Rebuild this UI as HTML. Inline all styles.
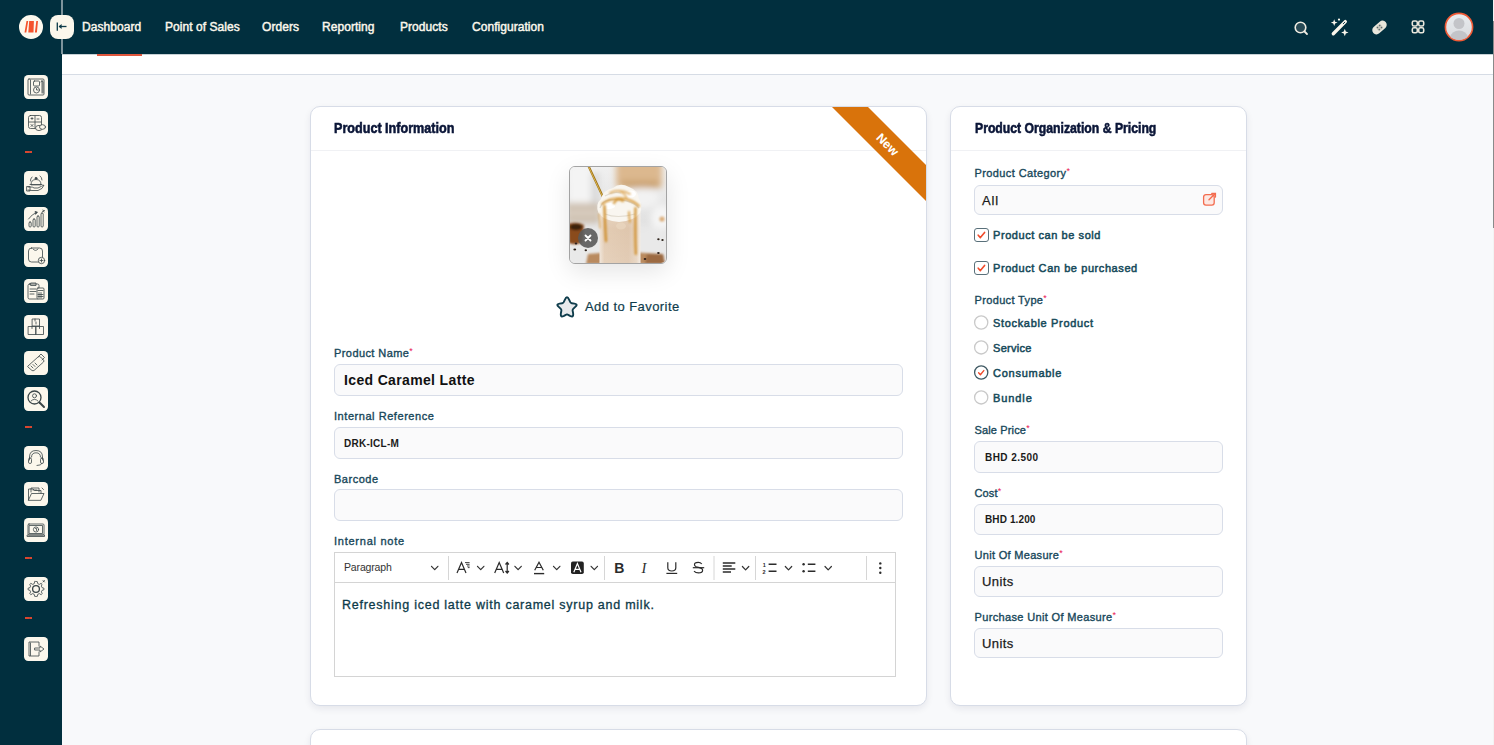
<!DOCTYPE html>
<html><head><meta charset="utf-8">
<style>
*{margin:0;padding:0;box-sizing:border-box}
html,body{width:1494px;height:745px;overflow:hidden;background:#f8f9fb;font-family:"Liberation Sans",sans-serif}
.a{position:absolute}
.t{position:absolute;line-height:1;white-space:nowrap}
#hdr{left:0;top:0;width:1493px;height:54px;background:#012f3e}
#side{left:0;top:0;width:62px;height:745px;background:#012f3e}
#strip{left:62px;top:54px;width:1431px;height:21px;background:#fff;border-bottom:1px solid #d6dce5}
.nav{font-size:12px;color:#fbf7ec;-webkit-text-stroke:.45px #fbf7ec;letter-spacing:.05px;top:21px}
.card{position:absolute;background:#fff;border:1px solid #d7dce7;border-radius:10px;box-shadow:0 3px 7px rgba(20,30,60,.08);overflow:hidden}
.ch{position:absolute;left:0;top:0;right:0;height:44px;border-bottom:1px solid #f0f1f4}
.title{font-size:14px;font-weight:bold;color:#0b1638;-webkit-text-stroke:.55px #0b1638;transform-origin:0 0;transform:scaleX(.9)}
.lbl{font-size:11px;color:#17475a;-webkit-text-stroke:.35px #17475a;letter-spacing:.15px}
.req{color:#e8134f;font-size:9px;vertical-align:top;position:relative;top:-1px;-webkit-text-stroke:0}
.inp{position:absolute;background:#fafafb;border:1.5px solid #d8dde8;border-radius:6px}
.sico{position:absolute;left:24px;width:24px;height:24px;background:#fbf7ec;border-radius:5px}
.dash{position:absolute;left:25px;width:7px;height:2px;background:repeating-linear-gradient(90deg,#d9462f 0 2px,#b8473a 2px 2.4px)}
.cbt{font-size:11px;color:#164a5a;-webkit-text-stroke:.5px #164a5a}
</style></head><body>
<div id="side" class="a"></div>
<div id="hdr" class="a"></div>
<div id="strip" class="a"></div>
<div class="a" style="left:62px;top:54px;width:1431px;height:1px;background:rgba(1,47,62,.22)"></div>
<!-- header divider line -->
<div class="a" style="left:61px;top:0;width:2px;height:54px;background:#7d939b"></div>
<!-- red underline -->
<div class="a" style="left:97px;top:54px;width:45px;height:1.5px;background:#e0573d"></div>

<!-- logo -->
<div class="a" style="left:19.4px;top:15px;width:23.8px;height:23.8px;border-radius:50%;background:#fdf9ee"></div>
<svg class="a" style="left:0;top:0" width="50" height="50" viewBox="0 0 50 50">
<path d="M24.5 32.6 L26.5 21 L28.2 21 L26.3 32.6 Z M29.2 21 L33.9 21 L33.5 32.6 L28.3 32.6 Z M36.3 21 L38 21 L36.9 32.6 L34.9 32.6 Z" fill="#f4532c"/>
</svg>
<!-- collapse button -->
<div class="a" style="left:50px;top:15px;width:24px;height:24px;border-radius:8px;background:#fbf7ec"></div>
<svg class="a" style="left:50px;top:15px" width="24" height="24" viewBox="0 0 24 24">
<path d="M7.3 7.5 V15.7" stroke="#0d3a49" stroke-width="1.3"/>
<path d="M9 11.5 H16.5" stroke="#0d3a49" stroke-width="1.3"/>
<path d="M8.6 11.5 L11.6 9 V14 Z" fill="#0d3a49"/>
</svg>

<!-- nav -->
<span class="t nav" style="left:82px">Dashboard</span>
<span class="t nav" style="left:165px">Point of Sales</span>
<span class="t nav" style="left:262px">Orders</span>
<span class="t nav" style="left:322px">Reporting</span>
<span class="t nav" style="left:400px">Products</span>
<span class="t nav" style="left:472px">Configuration</span>

<!-- header right icons -->
<svg class="a" style="left:1290px;top:16.7px" width="22" height="22" viewBox="0 0 22 22">
<circle cx="10.5" cy="10.5" r="5.3" fill="#284a55" stroke="#efece2" stroke-width="1.6"/>
<path d="M14.5 14.5 L17 17" stroke="#efece2" stroke-width="1.8" stroke-linecap="round"/>
</svg>
<svg class="a" style="left:1328px;top:16px" width="22" height="22" viewBox="0 0 22 22">
<path d="M5.3 17.8 L17.3 5.6" stroke="#fbf7ec" stroke-width="3.4" stroke-linecap="round"/>
<path d="M15.2 7.8 L16.8 6.2" stroke="#012f3e" stroke-width=".9" stroke-linecap="round"/>
<path d="M6.2 3.2 L7.1 5.7 L9.6 6.6 L7.1 7.5 L6.2 10 L5.3 7.5 L2.8 6.6 L5.3 5.7 Z" fill="#fbf7ec"/>
<path d="M16.8 12.8 L17.8 15.5 L20.5 16.5 L17.8 17.5 L16.8 20.2 L15.8 17.5 L13.1 16.5 L15.8 15.5 Z" fill="#fbf7ec"/>
<circle cx="11" cy="3.6" r="1.1" fill="#fbf7ec"/>
</svg>
<svg class="a" style="left:1368px;top:16px" width="22" height="22" viewBox="0 0 22 22">
<g transform="rotate(-42 11.5 11.5)"><rect x="3.2" y="7.3" width="16.6" height="8.4" rx="4.2" fill="#e9e7dc"/>
<rect x="8.6" y="8.7" width="5.8" height="5.6" rx="1" fill="#c9c8bd"/>
<circle cx="10" cy="10.2" r=".75" fill="#5d6b6e"/><circle cx="13" cy="10.2" r=".75" fill="#5d6b6e"/><circle cx="10" cy="12.8" r=".75" fill="#5d6b6e"/><circle cx="13" cy="12.8" r=".75" fill="#5d6b6e"/></g>
</svg>
<svg class="a" style="left:1407px;top:16px" width="22" height="22" viewBox="0 0 22 22">
<g fill="none" stroke="#e9e7dc" stroke-width="1.6">
<rect x="5.3" y="5" width="5" height="5" rx="1.6"/><rect x="11.7" y="5" width="5" height="5" rx="1.6"/>
<rect x="5.3" y="11.8" width="5" height="5" rx="1.6"/><rect x="11.7" y="11.8" width="5" height="5" rx="1.6"/>
</g></svg>
<svg class="a" style="left:1444px;top:12px" width="30" height="30" viewBox="0 0 30 30">
<defs><linearGradient id="av" x1="0" y1="0" x2="0" y2="1"><stop offset="0" stop-color="#e8ecef"/><stop offset="1" stop-color="#d9dadd"/></linearGradient>
<clipPath id="avc"><circle cx="15" cy="15" r="13"/></clipPath></defs>
<circle cx="15" cy="15" r="13.6" fill="url(#av)" stroke="#f05a35" stroke-width="1.6"/>
<g clip-path="url(#avc)"><circle cx="15" cy="11.5" r="5.5" fill="#c3c4c8"/><ellipse cx="15" cy="25" rx="8.5" ry="6.5" fill="#c3c4c8"/></g>
</svg>

<!-- sidebar icons -->
<svg class="a" style="left:24px;top:75px" width="24" height="24" viewBox="0 0 24 24"><rect width="24" height="24" rx="4.2" fill="#fbf7ec"/><g fill="none" stroke="#3a4547" stroke-width=".8" stroke-linecap="round" stroke-linejoin="round"><rect x="4" y="4" width="16" height="16" rx="1" /><path d="M6.5 5 V19"/><rect x="9.5" y="6" width="6" height="5" rx="1"/><circle cx="12.5" cy="15" r="3"/><path d="M12.5 13.5 V15 H14"/><path d="M18 6 V18 M17 7 L18 5.5 L19 7 V18"/></g></svg>
<svg class="a" style="left:24px;top:111px" width="24" height="24" viewBox="0 0 24 24"><rect width="24" height="24" rx="4.2" fill="#fbf7ec"/><g fill="none" stroke="#3a4547" stroke-width=".8" stroke-linecap="round" stroke-linejoin="round"><rect x="4.5" y="4.5" width="13" height="13" rx="2"/><path d="M11 5 V17 M5 11 H17"/><path d="M7 7.5 H9 M8 6.5 V8.5 M13 8 H15 M7 13.5 L9 15.5 M9 13.5 L7 15.5"/><ellipse cx="15" cy="17" rx="3.5" ry="2.6" fill="#fbf7ec"/><ellipse cx="18.5" cy="16" rx="3" ry="2.3" fill="#fbf7ec"/></g></svg>
<svg class="a" style="left:24px;top:171px" width="24" height="24" viewBox="0 0 24 24"><rect width="24" height="24" rx="4.2" fill="#fbf7ec"/><g fill="none" stroke="#3a4547" stroke-width=".8" stroke-linecap="round" stroke-linejoin="round"><path d="M7 13.5 Q7 8.5 12 8.5 Q17 8.5 17 13.5 Z"/><path d="M6 13.5 H18"/><circle cx="12" cy="7.3" r="1" fill="#3b4a4f"/><path d="M4 16 H7 Q9 16 10 17 H14 Q18 15 20 14 Q19 18 14 19.5 H8 L4 19"/><path d="M16 5 Q18 6 18 9 M8 6 Q6 8 6.5 10"/><rect x="3" y="15.5" width="3" height="4.5"/></g></svg>
<svg class="a" style="left:24px;top:207px" width="24" height="24" viewBox="0 0 24 24"><rect width="24" height="24" rx="4.2" fill="#fbf7ec"/><g fill="none" stroke="#3a4547" stroke-width=".8" stroke-linecap="round" stroke-linejoin="round"><rect x="5" y="15" width="2.2" height="5" rx="1"/><rect x="9" y="12" width="2.2" height="8" rx="1"/><rect x="13" y="9" width="2.2" height="11" rx="1"/><rect x="17" y="6" width="2.2" height="14" rx="1"/><path d="M4.5 12 Q8 7 12.5 5.5"/><path d="M11.5 4.5 L13.5 5.3 L11.8 7 Z" fill="#3b4a4f"/><path d="M19 3 L20 5 M20.5 3.5 L18.5 4.5"/></g></svg>
<svg class="a" style="left:24px;top:243px" width="24" height="24" viewBox="0 0 24 24"><rect width="24" height="24" rx="4.2" fill="#fbf7ec"/><g fill="none" stroke="#3a4547" stroke-width=".8" stroke-linecap="round" stroke-linejoin="round"><rect x="4.5" y="5" width="14" height="14" rx="3"/><path d="M9 6 Q11.5 9 14 6"/><circle cx="17.5" cy="17.5" r="3.2" fill="#fbf7ec"/><path d="M17.5 16 V19 M16 17.5 H19"/></g></svg>
<svg class="a" style="left:24px;top:279px" width="24" height="24" viewBox="0 0 24 24"><rect width="24" height="24" rx="4.2" fill="#fbf7ec"/><g fill="none" stroke="#3a4547" stroke-width=".8" stroke-linecap="round" stroke-linejoin="round"><rect x="4" y="5" width="11" height="15" rx="1.5"/><path d="M7 4 H12 V6.5 H7 Z"/><path d="M6 10 H12 M6 12.5 H12 M6 15 H10"/><rect x="13" y="9" width="7" height="11" rx="1" fill="#fbf7ec"/><path d="M14 11.5 H19 M15 13.5 V19 M17 13.5 V19 M14 15.5 H19 M14 17.5 H19"/></g></svg>
<svg class="a" style="left:24px;top:315px" width="24" height="24" viewBox="0 0 24 24"><rect width="24" height="24" rx="4.2" fill="#fbf7ec"/><g fill="none" stroke="#3a4547" stroke-width=".8" stroke-linecap="round" stroke-linejoin="round"><rect x="8.5" y="4" width="7" height="7"/><rect x="4.5" y="11.5" width="7.5" height="8"/><rect x="12" y="11.5" width="7.5" height="8"/><path d="M11 4 V6 M8 11.5 V13.5 M15.5 11.5 V13.5"/><path d="M12 7 V9"/></g></svg>
<svg class="a" style="left:24px;top:351px" width="24" height="24" viewBox="0 0 24 24"><rect width="24" height="24" rx="4.2" fill="#fbf7ec"/><g fill="none" stroke="#3a4547" stroke-width=".8" stroke-linecap="round" stroke-linejoin="round"><path d="M4 15 L14 6 Q15.5 5 16.5 6 L19.5 9 Q20.5 10 19.5 11 L10 19.5 Q9 20 8 19.5 L4 16 Z"/><path d="M14.5 5.5 L17 3 L20.5 6.5 L18 9"/><path d="M7 15 L9 17 M9 13.5 L11 15.5 M11 12 L13 14"/></g></svg>
<svg class="a" style="left:24px;top:387px" width="24" height="24" viewBox="0 0 24 24"><rect width="24" height="24" rx="4.2" fill="#fbf7ec"/><g fill="none" stroke="#3a4547" stroke-width=".8" stroke-linecap="round" stroke-linejoin="round"><circle cx="10.5" cy="10.5" r="6.5" stroke-width="1.3"/><circle cx="10.5" cy="8.8" r="2"/><path d="M7 14 Q10.5 10.5 14 14"/><path d="M15.5 15.5 L20 20" stroke-width="2"/></g></svg>
<svg class="a" style="left:24px;top:446px" width="24" height="24" viewBox="0 0 24 24"><rect width="24" height="24" rx="4.2" fill="#fbf7ec"/><g fill="none" stroke="#3a4547" stroke-width=".8" stroke-linecap="round" stroke-linejoin="round"><path d="M5.5 14 V11 Q5.5 4.5 12 4.5 Q18.5 4.5 18.5 11 V14"/><rect x="4.5" y="12" width="3" height="5.5" rx="1.4"/><rect x="16.5" y="12" width="3" height="5.5" rx="1.4"/><path d="M18 17.5 Q17 19.5 13 19.5"/><path d="M7.5 11 Q7.5 6.8 12 6.8 Q16.5 6.8 16.5 11"/></g></svg>
<svg class="a" style="left:24px;top:482px" width="24" height="24" viewBox="0 0 24 24"><rect width="24" height="24" rx="4.2" fill="#fbf7ec"/><g fill="none" stroke="#3a4547" stroke-width=".8" stroke-linecap="round" stroke-linejoin="round"><path d="M4.5 18 V7 H9 L10.5 8.5 H17 V11"/><path d="M4.5 18 L7.5 11.5 H20 L17 18 Z"/><path d="M7 10 V6 H15 V10" /><path d="M9 8 H13"/><path d="M18 6 L19.5 7.5"/></g></svg>
<svg class="a" style="left:24px;top:518px" width="24" height="24" viewBox="0 0 24 24"><rect width="24" height="24" rx="4.2" fill="#fbf7ec"/><g fill="none" stroke="#3a4547" stroke-width=".8" stroke-linecap="round" stroke-linejoin="round"><rect x="4" y="6" width="16" height="11" rx="1"/><rect x="5.5" y="7.5" width="13" height="8"/><circle cx="12" cy="11.5" r="2.6"/><path d="M11.5 10.5 H12.5 V12.5"/><path d="M3.5 17 H20.5 V18.5 H3.5 Z"/></g></svg>
<svg class="a" style="left:24px;top:577px" width="24" height="24" viewBox="0 0 24 24"><rect width="24" height="24" rx="4.2" fill="#fbf7ec"/><g fill="none" stroke="#3a4547" stroke-width=".8" stroke-linecap="round" stroke-linejoin="round"><path d="M12 4.5 L13.3 4.6 L13.8 6.7 L15.3 7.4 L17.1 6.3 L18 7.2 L17.4 9.2 L18 10.6 L20 11.3 V12.7 L18 13.4 L17.4 14.8 L18.2 16.7 L17.2 17.7 L15.3 16.6 L13.8 17.3 L13.3 19.4 H10.7 L10.2 17.3 L8.7 16.6 L6.8 17.7 L5.8 16.7 L6.6 14.8 L6 13.4 L4 12.7 V11.3 L6 10.6 L6.6 9.2 L5.8 7.3 L6.8 6.3 L8.7 7.4 L10.2 6.7 L10.7 4.6 Z"/><circle cx="12" cy="12" r="3.4" stroke-width="1.3"/><path d="M19 3.5 L20.5 5 M20.5 3.5 L19 5"/></g></svg>
<svg class="a" style="left:24px;top:637px" width="24" height="24" viewBox="0 0 24 24"><rect width="24" height="24" rx="4.2" fill="#fbf7ec"/><g fill="none" stroke="#3a4547" stroke-width=".8" stroke-linecap="round" stroke-linejoin="round"><path d="M15 9 V5 H5 V19 H15 V15"/><path d="M6.5 6 V18.5"/><path d="M11 11 H16 V9 L20 12 L16 15 V13 H11 Z"/></g></svg>
<div class="a" style="left:25px;top:151px;width:7px;height:2px;background:repeating-linear-gradient(90deg,#d9462f 0 2px,#b8473a 2px 2.4px)"></div>
<div class="a" style="left:25px;top:426px;width:7px;height:2px;background:repeating-linear-gradient(90deg,#d9462f 0 2px,#b8473a 2px 2.4px)"></div>
<div class="a" style="left:25px;top:557px;width:7px;height:2px;background:repeating-linear-gradient(90deg,#d9462f 0 2px,#b8473a 2px 2.4px)"></div>
<div class="a" style="left:25px;top:617px;width:7px;height:2px;background:repeating-linear-gradient(90deg,#d9462f 0 2px,#b8473a 2px 2.4px)"></div>


<!-- CARD 1 -->
<div class="card" style="left:310px;top:106px;width:617px;height:600px">
  <div class="ch"></div>
  <svg class="a" style="left:0;top:0" width="617" height="600"><polygon points="521,0 557,0 757,200 721,200" fill="#d9730b"/>
  <text x="0" y="0" transform="translate(573.5 40.5) rotate(45)" text-anchor="middle" font-family="Liberation Sans" font-weight="bold" font-size="12.5" fill="#fff">New</text></svg>
</div>
<span class="t title" style="left:334px;top:121px">Product Information</span>

<!-- card1 content -->
<div class="a" style="left:569px;top:166px;width:98px;height:98px;border-radius:6px;box-shadow:0 8px 24px rgba(0,0,0,.10);border:1px solid #a3a3a3;overflow:hidden;background:#eee">
<svg class="a" style="left:-1px;top:-1px" width="98" height="98" viewBox="0 0 98 98">
<defs>
<filter id="b3" x="-30%" y="-30%" width="160%" height="160%"><feGaussianBlur stdDeviation="3"/></filter>
<filter id="b2" x="-30%" y="-30%" width="160%" height="160%"><feGaussianBlur stdDeviation="1.8"/></filter>
<filter id="b1" x="-30%" y="-30%" width="160%" height="160%"><feGaussianBlur stdDeviation="0.8"/></filter>
<filter id="b05" x="-30%" y="-30%" width="160%" height="160%"><feGaussianBlur stdDeviation="0.5"/></filter>
<linearGradient id="bgG" x1="0" y1="0" x2="0" y2="1"><stop offset="0" stop-color="#f0f0f0"/><stop offset=".55" stop-color="#e2e2e2"/><stop offset="1" stop-color="#ececec"/></linearGradient>
<linearGradient id="latte" x1="0" y1="0" x2="1" y2="0"><stop offset="0" stop-color="#efe4d8"/><stop offset=".12" stop-color="#e3ccb4"/><stop offset=".7" stop-color="#dfc6ad"/><stop offset=".9" stop-color="#e6d3bf"/><stop offset="1" stop-color="#f3ebe2"/></linearGradient>
<linearGradient id="latteV" x1="0" y1="0" x2="0" y2="1"><stop offset="0" stop-color="#fff" stop-opacity=".25"/><stop offset=".4" stop-color="#fff" stop-opacity="0"/><stop offset="1" stop-color="#fff" stop-opacity=".1"/></linearGradient>
</defs>
<rect width="98" height="98" fill="url(#bgG)"/>
<g filter="url(#b3)">
<rect x="0" y="0" width="30" height="38" fill="#f4f4f4"/>
<rect x="22" y="6" width="8" height="32" fill="#d9d9d9"/>
<rect x="47" y="-6" width="46" height="28" rx="3" fill="#dcb88e"/>
<rect x="52" y="15" width="38" height="7" fill="#c9a070"/>
<ellipse cx="74" cy="32" rx="16" ry="10" fill="#f2f2f2"/>
<ellipse cx="93" cy="52" rx="11" ry="13" fill="#f5f5f5"/>
<rect x="-3" y="37" width="34" height="20" rx="3" fill="#cdbfaf"/>
<rect x="-3" y="45" width="32" height="4" fill="#ded4c8"/>
<rect x="0" y="62" width="98" height="36" fill="#e9e9e9"/>
</g>
<circle cx="93" cy="53" r="2.6" fill="#dcae7a" filter="url(#b1)"/>
<g filter="url(#b1)">
<path d="M-1 58 Q8 55 15 59 L13.5 76 Q7 80 0 77 Z" fill="#8a4b1e"/>
<ellipse cx="7" cy="61" rx="6.5" ry="3.2" fill="#3b200e"/>
<path d="M17 98 L19 88 Q40 85.5 60 86 L94 88 L96 98 Z" fill="#b98a5e"/><path d="M76 98 L78 88 L94 88 L96 98 Z" fill="#9c6a42"/>
</g>
<g fill="#2e221b" filter="url(#b05)">
<ellipse cx="7" cy="77.5" rx="1.3" ry="1"/><ellipse cx="5.8" cy="83.6" rx="1.4" ry="1"/><ellipse cx="16.8" cy="84.3" rx="1.2" ry="1"/>
<ellipse cx="89.4" cy="73.3" rx="1.2" ry="1"/><ellipse cx="93.5" cy="74" rx="1.2" ry="1"/><ellipse cx="89.4" cy="87" rx="1.3" ry="1"/><ellipse cx="76" cy="93" rx="1.3" ry="1"/>
</g>
<path d="M19.5 0 L34 31" stroke="#9a6d12" stroke-width="2.1" filter="url(#b05)"/>
<path d="M19.3 0 L33.8 31" stroke="#e8c55e" stroke-width=".8"/>
<g filter="url(#b05)">
<path d="M30.5 44 Q30.5 40 33 40 L69 40 Q71.5 40 71.5 44 L71.5 97 L30.5 97 Z" fill="url(#latte)"/>
<path d="M30.5 44 Q30.5 40 33 40 L69 40 Q71.5 40 71.5 44 L71.5 97 L30.5 97 Z" fill="url(#latteV)"/>
<ellipse cx="52" cy="60" rx="5" ry="3.5" fill="#e8d4be" opacity=".8"/>
<ellipse cx="42" cy="70" rx="4" ry="3" fill="#e2cbb3" opacity=".6"/>
</g>
<g filter="url(#b05)">
<path d="M29.5 47 Q26 38 32 33 Q34 24 44 22 Q51 16 60 21 Q69 24 70 33 Q74 40 71 47 Q65 55 50 56 Q35 55 29.5 47 Z" fill="#f9f6f0"/>
<path d="M31 42 Q33 35 40 34 Q50 33 58 35 Q66 37 70 42" fill="none" stroke="#dcd8d0" stroke-width="1.3"/>
<path d="M36 30 Q44 25 52 27" fill="none" stroke="#e0dcd4" stroke-width="1.2"/>
<path d="M36 48 Q48 53 66 48" fill="none" stroke="#e2dcd0" stroke-width="1.2"/>
<ellipse cx="62" cy="28" rx="5" ry="3.5" fill="#fff"/>
<ellipse cx="40" cy="40" rx="6" ry="3" fill="#fff"/>
</g>
<g filter="url(#b1)" fill="none" stroke-linecap="round">
<path d="M33 38 Q43 30 57 33 Q65 35 70 40" stroke="#d99b3c" stroke-width="1.9"/>
<path d="M41 27 Q50 22 61 28" stroke="#dba24f" stroke-width="1.6"/>
<path d="M45 37 Q48 31 54 35" stroke="#d49738" stroke-width="2.2"/>
<path d="M50 25 Q56 27 58 33" stroke="#e0ad60" stroke-width="1.4"/>
<path d="M35.5 40 Q36 60 37 75" stroke="#cf8f2e" stroke-width="2.4"/>
<path d="M66.5 42 Q66 70 66.8 88" stroke="#d08f2c" stroke-width="2.2"/>
<path d="M60 46 Q60 52 61 56" stroke="#d89e44" stroke-width="1.8"/>
<path d="M30 48 Q31 56 31 62" stroke="#d9a559" stroke-width="1.3"/>
</g>
<circle cx="19" cy="72" r="10" fill="#5a5a5a" opacity=".9"/>
<path d="M16.5 69.5 L21.5 74.5 M21.5 69.5 L16.5 74.5" stroke="#fff" stroke-width="1.8" stroke-linecap="round"/>
</svg>
</div>
<svg class="a" style="left:555px;top:295px" width="24" height="24" viewBox="0 0 24 24">
<path d="M12 2.2 C13 2.2 13.4 3 14.2 4.8 L15.3 7.2 C15.6 7.8 16 8.1 16.7 8.2 L19.4 8.6 C21.4 8.9 22 9.6 21.5 10.5 C21.3 10.9 20.8 11.4 20 12.1 L18.2 13.9 C17.7 14.4 17.5 14.9 17.6 15.5 L18.1 18.2 C18.4 20.2 18.2 21.3 17.2 21.5 C16.7 21.6 16 21.3 15 20.8 L12.8 19.6 C12.3 19.3 11.7 19.3 11.2 19.6 L9 20.8 C8 21.3 7.3 21.6 6.8 21.5 C5.8 21.3 5.6 20.2 5.9 18.2 L6.4 15.5 C6.5 14.9 6.3 14.4 5.8 13.9 L4 12.1 C3.2 11.4 2.7 10.9 2.5 10.5 C2 9.6 2.6 8.9 4.6 8.6 L7.3 8.2 C8 8.1 8.4 7.8 8.7 7.2 L9.8 4.8 C10.6 3 11 2.2 12 2.2 Z" fill="#e8eaec" stroke="#0f3d4c" stroke-width="1.9" stroke-linejoin="round"/>
</svg>
<span class="t" style="left:585px;top:299.7px;font-size:13px;color:#0f3c4c;-webkit-text-stroke:.2px #0f3c4c;letter-spacing:.43px">Add to Favorite</span>

<span class="t lbl" style="left:334px;top:348.4px;letter-spacing:.42px">Product Name<span class="req">*</span></span>
<div class="inp" style="left:334px;top:364px;width:569px;height:32px"></div>
<span class="t" style="left:344px;top:373px;font-size:14px;font-weight:bold;color:#111;letter-spacing:.35px">Iced Caramel Latte</span>

<span class="t lbl" style="left:334px;top:411px;letter-spacing:.55px">Internal Reference</span>
<div class="inp" style="left:334px;top:427px;width:569px;height:32px"></div>
<span class="t" style="left:344px;top:439.3px;font-size:10px;font-weight:bold;color:#1a1a1a;letter-spacing:.26px">DRK-ICL-M</span>

<span class="t lbl" style="left:334px;top:473.6px;letter-spacing:.52px">Barcode</span>
<div class="inp" style="left:334px;top:489px;width:569px;height:32px"></div>

<span class="t lbl" style="left:334px;top:536.2px;letter-spacing:.75px">Internal note</span>
<div class="a" style="left:334px;top:552px;width:562px;height:125px;border:1px solid #d4d4d4;background:#fff"></div>
<div class="a" style="left:335px;top:582px;width:560px;height:1px;background:#d4d4d4"></div>
<svg class="a" style="left:334px;top:552px" width="562" height="31" viewBox="334 552 562 31">
<text x="344" y="571.2" font-family="Liberation Sans" font-size="10.5" letter-spacing="-.15" fill="#333">Paragraph</text>
<g fill="none" stroke="#333" stroke-width="1.2" stroke-linecap="round" stroke-linejoin="round">
<path d="M431.5 566.3 L434.7 569.7 L437.9 566.3"/>
<path d="M477.5 566.3 L480.7 569.7 L483.9 566.3"/>
<path d="M514.9 566.3 L518.1 569.7 L521.3 566.3"/>
<path d="M553.5 566.3 L556.7 569.7 L559.9 566.3"/>
<path d="M591.1 566.3 L594.3 569.7 L597.5 566.3"/>
<path d="M742.4 566.5 L745.6 569.9 L748.8 566.5"/>
<path d="M785.3 566.5 L788.5 569.9 L791.7 566.5"/>
<path d="M825 566.5 L828.2 569.9 L831.4 566.5"/>
</g>
<g stroke="#d6d6d6" stroke-width="1"><path d="M448.5 556 V580"/><path d="M604.5 556 V580"/><path d="M714 556 V580"/><path d="M755.5 556 V580"/><path d="M866.5 556 V580"/></g>
<g fill="none" stroke="#2b2b2b" stroke-width="1.2">
<path d="M457 573 L461.5 562.5 L466 573 M458.7 569.3 H464.3"/>
<path d="M465 562.6 H469.6 M466 564.3 H469.6 M467 566 H469.6 M467.8 567.6 H469.6" stroke-width=".9"/>
<path d="M494.7 573 L499.2 562.5 L503.7 573 M496.4 569.3 H502"/>
<path d="M507.2 562.6 V573 M505.5 564.5 L507.2 562.5 L508.9 564.5 M505.5 571 L507.2 573 L508.9 571"/>
<path d="M534.7 570.3 L539 562.3 L543.3 570.3 M536.3 567.5 H541.7"/>
<path d="M534 573.6 H544.2" stroke-width="1.4"/>
</g>
<rect x="571" y="561.6" width="12.8" height="12.4" rx="1.8" fill="#222"/>
<path d="M573.8 572.3 L577.4 563.5 L581 572.3 M575.1 569.3 H579.7" fill="none" stroke="#fff" stroke-width="1.2"/>
<text x="614.3" y="572.6" font-family="Liberation Sans" font-weight="bold" font-size="14" fill="#2b2b2b">B</text>
<text x="641.5" y="572.6" font-family="Liberation Serif" font-style="italic" font-size="14.5" fill="#2b2b2b">I</text>
<g fill="none" stroke="#2b2b2b" stroke-width="1.2">
<path d="M667.8 562.2 V567.8 Q667.8 571 671.8 571 Q675.8 571 675.8 567.8 V562.2"/>
<path d="M666.4 573.4 H677.2"/>
<path d="M701.8 564 Q700.5 562.3 698.2 562.3 Q694.2 562.3 694.5 565 Q694.8 566.7 698.5 567.4 Q702.6 568.2 702.6 570.3 Q702.6 572.9 698.5 572.9 Q695.6 572.9 694 571.2"/>
<path d="M692.8 567.7 H704.2"/>
</g>
<g stroke="#2b2b2b" stroke-width="1.5">
<path d="M722.8 562.9 H735.3 M722.8 565.9 H731.7 M722.8 569 H735.3 M722.8 572.1 H731"/>
<path d="M768.6 564.2 H776.5 M768.6 571.2 H776.5 M807.8 564.2 H815.4 M807.8 571.2 H815.4"/>
</g>
<text x="762.8" y="566.6" font-family="Liberation Sans" font-weight="bold" font-size="5.5" fill="#2b2b2b">1</text>
<text x="762.6" y="573.6" font-family="Liberation Sans" font-weight="bold" font-size="5.5" fill="#2b2b2b">2</text>
<circle cx="803.6" cy="564.2" r="1.2" fill="#2b2b2b"/><circle cx="803.6" cy="571.2" r="1.2" fill="#2b2b2b"/>
<circle cx="880.3" cy="563.4" r="1.2" fill="#2b2b2b"/><circle cx="880.3" cy="568" r="1.2" fill="#2b2b2b"/><circle cx="880.3" cy="572.7" r="1.2" fill="#2b2b2b"/>
</svg>

<span class="t" style="left:342px;top:599px;font-size:12.5px;color:#0d3a49;-webkit-text-stroke:.3px #0d3a49;letter-spacing:.75px">Refreshing iced latte with caramel syrup and milk.</span>

<!-- CARD 2 -->
<div class="card" style="left:950px;top:106px;width:297px;height:600px">
  <div class="ch"></div>
</div>
<span class="t title" style="left:975px;top:121px;transform:scaleX(.873)">Product Organization &amp; Pricing</span>

<!-- card2 content -->
<span class="t lbl" style="left:974.5px;top:168.4px;letter-spacing:.4px">Product Category<span class="req">*</span></span>
<div class="inp" style="left:974px;top:185px;width:249px;height:30px"></div>
<span class="t" style="left:982px;top:194.4px;font-size:13px;letter-spacing:.9px;color:#1a1a1a;-webkit-text-stroke:.25px #1a1a1a">All</span>
<svg class="a" style="left:1201px;top:191px" width="16" height="16" viewBox="0 0 16 16">
<rect x="2.6" y="3.6" width="10.6" height="10.6" rx="2.4" fill="#fde8e3" stroke="#f36c4f" stroke-width="1.3"/>
<path d="M8 8.8 L14.2 2.6 M10.8 2.4 H14.4 V6" fill="none" stroke="#f36c4f" stroke-width="1.4" stroke-linecap="round"/>
</svg>
<div class="a" style="left:974px;top:228px;width:14.5px;height:14px;border:1.4px solid #59707a;border-radius:3px;background:#fff"></div>
<svg class="a" style="left:974px;top:228px" width="15" height="14" viewBox="0 0 15 14"><path d="M4.2 7.2 L6.4 9.6 L10.6 4.4" fill="none" stroke="#f04a2a" stroke-width="1.6" stroke-linecap="round" stroke-linejoin="round"/></svg>
<span class="t cbt" style="left:993px;top:230px;letter-spacing:.57px">Product can be sold</span>
<div class="a" style="left:974px;top:260.5px;width:14.5px;height:14px;border:1.4px solid #59707a;border-radius:3px;background:#fff"></div>
<svg class="a" style="left:974px;top:260.5px" width="15" height="14" viewBox="0 0 15 14"><path d="M4.2 7.2 L6.4 9.6 L10.6 4.4" fill="none" stroke="#f04a2a" stroke-width="1.6" stroke-linecap="round" stroke-linejoin="round"/></svg>
<span class="t cbt" style="left:993px;top:263px;letter-spacing:.58px">Product Can be purchased</span>

<span class="t lbl" style="left:974.5px;top:294.9px;letter-spacing:.35px">Product Type<span class="req">*</span></span>
<svg class="a" style="left:973px;top:314px" width="17" height="92" viewBox="0 0 17 92">
<circle cx="8.2" cy="8.5" r="6.6" fill="#fff" stroke="#c9c9c9" stroke-width="1.3"/>
<circle cx="8.2" cy="33.4" r="6.6" fill="#fff" stroke="#c9c9c9" stroke-width="1.3"/>
<circle cx="8.2" cy="58.5" r="6.6" fill="#fff" stroke="#3f5963" stroke-width="1.3"/>
<path d="M5.6 58.8 L7.4 60.7 L10.8 56.6" fill="none" stroke="#f04a2a" stroke-width="1.4" stroke-linecap="round" stroke-linejoin="round"/>
<circle cx="8.2" cy="83.4" r="6.6" fill="#fff" stroke="#c9c9c9" stroke-width="1.3"/>
</svg>
<span class="t cbt" style="left:993px;top:317.7px;letter-spacing:.67px">Stockable Product</span>
<span class="t cbt" style="left:993px;top:342.6px;letter-spacing:.3px">Service</span>
<span class="t cbt" style="left:993px;top:367.5px;letter-spacing:.74px">Consumable</span>
<span class="t cbt" style="left:993px;top:392.5px;letter-spacing:.9px">Bundle</span>

<span class="t lbl" style="left:974.5px;top:425px">Sale Price<span class="req">*</span></span>
<div class="inp" style="left:974px;top:441px;width:249px;height:31.5px"></div>
<span class="t" style="left:985px;top:453px;font-size:10px;font-weight:bold;color:#1a1a1a;letter-spacing:.45px">BHD 2.500</span>
<span class="t lbl" style="left:974.5px;top:487.5px">Cost<span class="req">*</span></span>
<div class="inp" style="left:974px;top:503.5px;width:249px;height:31.5px"></div>
<span class="t" style="left:985px;top:515.3px;font-size:10px;font-weight:bold;color:#1a1a1a;letter-spacing:.12px">BHD 1.200</span>
<span class="t lbl" style="left:974.5px;top:549.7px;letter-spacing:.31px">Unit Of Measure<span class="req">*</span></span>
<div class="inp" style="left:974px;top:566px;width:249px;height:31px"></div>
<span class="t" style="left:982px;top:574.6px;font-size:13px;letter-spacing:.4px;color:#1a1a1a;-webkit-text-stroke:.25px #1a1a1a">Units</span>
<span class="t lbl" style="left:974.5px;top:611.5px;letter-spacing:.35px">Purchase Unit Of Measure<span class="req">*</span></span>
<div class="inp" style="left:974px;top:627.5px;width:249px;height:30.5px"></div>
<span class="t" style="left:982px;top:637px;font-size:13px;letter-spacing:.4px;color:#1a1a1a;-webkit-text-stroke:.25px #1a1a1a">Units</span>

<!-- CARD 3 -->
<div class="card" style="left:310px;top:729px;width:937px;height:60px"></div>

<!-- scrollbar thumb -->
<div class="a" style="left:1493px;top:0;width:1px;height:745px;background:#f3f3f3"></div><div class="a" style="left:1493px;top:21px;width:1px;height:207px;background:#8a8a8a"></div>
</body></html>
